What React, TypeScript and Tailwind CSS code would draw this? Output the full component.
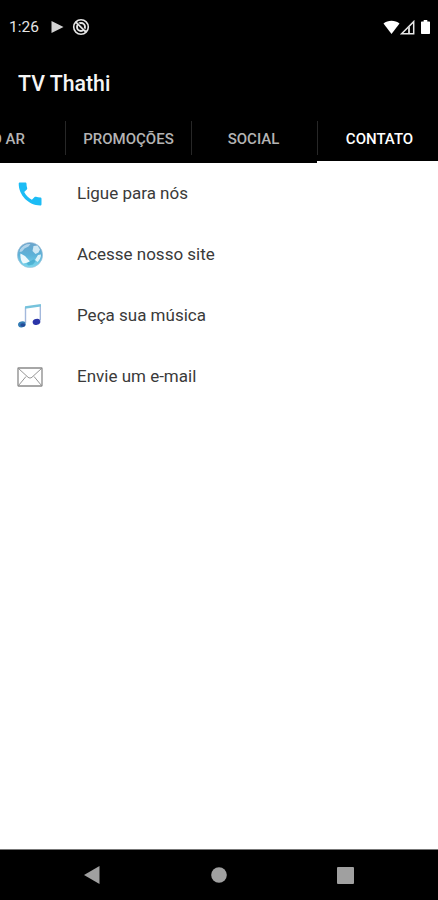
import type { ReactNode } from "react";

function PhoneIcon() {
  return (
    <svg width="26" height="26" viewBox="0 0 26 26">
      <path
        d="M3 1.500h5.200c.8 0 1.300.5 1.300 1.300 0 1.600.2 3 .7 4.300.1.500 0 1-.4 1.400L7.200 11.100c1.900 3.600 4.300 5.900 7.700 7.700l2.700-2.700c.4-.4.900-.5 1.400-.3 1.300.4 2.700.6 4.200.6.8 0 1.300.5 1.300 1.300v5.500c0 .8-.5 1.300-1.300 1.300C11.700 24.500 1.700 14.200 1.700 2.800c0-.8.5-1.300 1.300-1.300z"
        fill="#1cbcf5"
      />
    </svg>
  );
}

function GlobeIcon() {
  return (
    <svg width="28" height="28" viewBox="0 0 28 28">
      <defs>
        <linearGradient id="globe" x1="0" y1="0" x2="0" y2="1">
          <stop offset="0" stopColor="#6aa3cb" />
          <stop offset="0.5" stopColor="#5db2d8" />
          <stop offset="1" stopColor="#7ad8ee" />
        </linearGradient>
      </defs>
      <circle cx="14" cy="14" r="12.600" fill="url(#globe)" stroke="#a3c0d6" strokeWidth="0.600" />
      <path d="M4 8.500c2.500-4 6.500-6 10.500-5.500l-2 2.500-4 2-2.500 3-2.500.5z" fill="#c4dff0" opacity="0.8" />
      <path d="M4.500 12.500l4.500 2.500 5 5.500-4 1.500-3 .5c-2-2.500-3-6-2.500-10z" fill="#f4fcfe" opacity="0.95" />
      <path d="M17.500 5l4-.5 2.500 4-1.500 3-3 1.500-3-3z" fill="#e3f3fa" opacity="0.85" />
      <path d="M22 14l3-.5c0 3-1.500 5.500-3.500 7.500l-2.500-2z" fill="#e9f8fc" opacity="0.9" />
      <path d="M13.500 20.500l4-2 2 1.500-2.500 3.500-4.500 1-2-2z" fill="#3ba2c6" opacity="0.6" />
    </svg>
  );
}

function MusicIcon() {
  return (
    <svg width="28" height="28" viewBox="0 0 28 28">
      <path d="M9.500 21V5.300M24.300 18.500V3" stroke="#a3b8dc" strokeWidth="1.400" fill="none" />
      <path d="M9 4.200l15.900-2.200v2.600L9 6.800z" fill="#76c3dc" />
      <ellipse cx="5.900" cy="22.400" rx="3.900" ry="2.900" transform="rotate(-15 5.900 22.400)" fill="#347cb5" />
      <ellipse cx="6.800" cy="23" rx="2.500" ry="1.800" fill="#234b98" />
      <ellipse cx="20.500" cy="19.900" rx="3.900" ry="2.900" transform="rotate(-15 20.500 19.900)" fill="#2a34a8" />
    </svg>
  );
}

function MailIcon() {
  return (
    <svg width="26" height="20" viewBox="0 0 26 20" fill="none" stroke="#8a8a8a">
      <rect x="1" y="1" width="24" height="18" rx="0.500" strokeWidth="1.300" />
      <path d="M1.500 1.500l9.500 8.700c1.200 1.100 2.800 1.100 4 0l9.500-8.700M1.500 18.500l7.500-9M24.500 18.500L17 9.500" strokeWidth="0.900" />
    </svg>
  );
}

const contacts: { label: string; icon: ReactNode }[] = [
  { label: "Ligue para nós", icon: <PhoneIcon /> },
  { label: "Acesse nosso site", icon: <GlobeIcon /> },
  { label: "Peça sua música", icon: <MusicIcon /> },
  { label: "Envie um e-mail", icon: <MailIcon /> },
];

function StatusBar() {
  return (
    <div className="flex h-[54px] items-center pl-[9px] pr-[8px]">
      <span className="w-[42px] whitespace-nowrap pt-[2px] text-[15.5px] text-[#e5e5e5]">1:26</span>
      <svg width="13" height="14" viewBox="0 0 13 14">
        <path d="M.5 1l12 6-12 6z" fill="#d2d2d2" />
      </svg>
      <svg className="ml-[8px]" width="18" height="18" viewBox="0 0 18 18" fill="none" stroke="#e4e4e4">
        <circle cx="9" cy="9" r="7.300" strokeWidth="1.600" />
        <circle cx="9" cy="9" r="4" strokeWidth="1.900" />
        <path d="M4 4l10 10" strokeWidth="1.900" />
        <path d="M5.500 4l8 8" stroke="#000" strokeWidth="0.900" />
      </svg>
      <div className="ml-auto flex items-center">
        <svg width="17" height="15" viewBox="0 0 17 15">
          <path d="M.5 3.600C4.800-.1 12.200-.1 16.500 3.600L8.500 14z" fill="#fff" />
        </svg>
        <svg width="15" height="15" viewBox="0 0 15 15">
          <path d="M1.600 13.700L13.700 1.600v12.100z" fill="none" stroke="#e8e8e8" strokeWidth="1.500" />
          <path d="M8 8l2-2v7H8z" fill="#ccc" />
        </svg>
        <svg className="ml-[6px]" width="9" height="14" viewBox="0 0 10 15" preserveAspectRatio="none">
          <path d="M3 0h4v1.500h2.300c.4 0 .7.300.7.700v12c0 .4-.3.800-.7.800H.7c-.4 0-.7-.4-.7-.8v-12c0-.4.3-.7.7-.7H3z" fill="#fff" />
        </svg>
      </div>
    </div>
  );
}

function Divider() {
  return <div className="mt-[7px] h-[34px] w-px bg-[#272727]" />;
}

function Tabs() {
  return (
    <div className="flex h-[49px] overflow-hidden whitespace-nowrap text-[15px] font-medium leading-[50px] text-[#b4b4b4]">
      {/* scrolled partly out of view */}
      <div className="flex w-[65px] shrink-0 justify-end pr-[40px]">
        <span>NO AR</span>
      </div>
      <div className="flex w-[126px] shrink-0">
        <Divider />
        <span className="flex-1 text-center">PROMOÇÕES</span>
      </div>
      <div className="flex w-[126px] shrink-0">
        <Divider />
        <span className="flex-1 pr-[2px] text-center">SOCIAL</span>
      </div>
      <div className="flex w-[121px] shrink-0 border-b-2 border-white text-white">
        <Divider />
        <span className="flex-1 pl-[3px] text-center">CONTATO</span>
      </div>
    </div>
  );
}

export default function App() {
  return (
    <div className="flex h-[900px] w-[438px] flex-col overflow-hidden bg-white font-['Roboto',sans-serif]">
      <header className="bg-black">
        <StatusBar />
        <h1 className="h-[60px] pl-[18px] text-[21.3px] font-medium leading-[60px] text-[#f5f5f5]">TV Thathi</h1>
        <Tabs />
      </header>

      <ul className="flex-1">
        {contacts.map(({ label, icon }) => (
          <li key={label} className="flex h-[61px] items-center">
            <div className="flex w-[60px] justify-center pt-px">{icon}</div>
            <span className="ml-[17px] pb-[2px] text-[17px] leading-[24px] text-[#3a3a3a]">{label}</span>
          </li>
        ))}
      </ul>

      <nav className="flex h-[51px] items-center border-t border-[#777] bg-black">
        <svg className="ml-[83px]" width="18" height="20" viewBox="0 0 18 20">
          <path d="M1 10L16.500 1v18z" fill="#a0a0a0" />
        </svg>
        <svg className="ml-[110px]" width="16" height="16" viewBox="0 0 16 16">
          <circle cx="8" cy="8" r="7.800" fill="#a0a0a0" />
        </svg>
        <div className="ml-[110px] size-[17px] rounded-[1px] bg-[#a0a0a0]" />
      </nav>
    </div>
  );
}
